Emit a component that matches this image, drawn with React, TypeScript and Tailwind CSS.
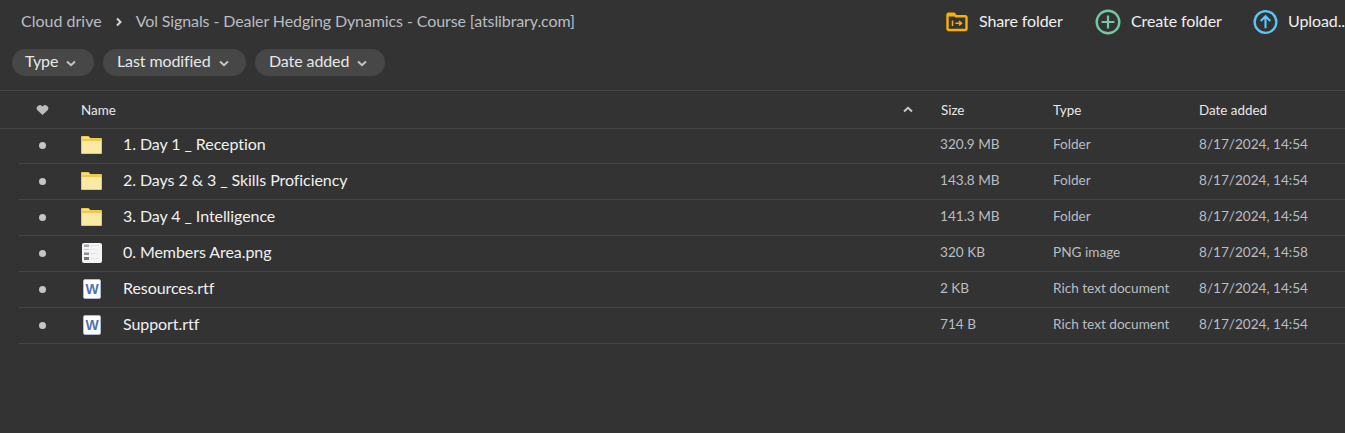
import React from "react";

interface FileRow {
  name: string;
  size: string;
  type: string;
  date: string;
  icon: "folder" | "image" | "word";
}

const rows: FileRow[] = [
  { name: "1. Day 1 _ Reception", size: "320.9 MB", type: "Folder", date: "8/17/2024, 14:54", icon: "folder" },
  { name: "2. Days 2 & 3 _ Skills Proficiency", size: "143.8 MB", type: "Folder", date: "8/17/2024, 14:54", icon: "folder" },
  { name: "3. Day 4 _ Intelligence", size: "141.3 MB", type: "Folder", date: "8/17/2024, 14:54", icon: "folder" },
  { name: "0. Members Area.png", size: "320 KB", type: "PNG image", date: "8/17/2024, 14:58", icon: "image" },
  { name: "Resources.rtf", size: "2 KB", type: "Rich text document", date: "8/17/2024, 14:54", icon: "word" },
  { name: "Support.rtf", size: "714 B", type: "Rich text document", date: "8/17/2024, 14:54", icon: "word" },
];

const FolderIcon = () => (
  <svg width="21" height="18" viewBox="0 0 21 18">
    <path d="M0 1a1 1 0 0 1 1-1h6.500l2 2H20a1 1 0 0 1 1 1v14a1 1 0 0 1-1 1H1a1 1 0 0 1-1-1Z" fill="#efc94c" />
    <path d="M1 5h19v11.500a.5.5 0 0 1-.5.5h-18a.5.5 0 0 1-.5-.5Z" fill="#fbe9a6" />
    <path d="M1 1h6l2 2H1Z" fill="#f5dc86" />
  </svg>
);

const ImageIcon = () => (
  <svg width="20" height="20" viewBox="0 0 20 20">
    <rect x="0" y="0" width="20" height="20" rx="2" fill="#f4f4f4" />
    <rect x="2" y="1.500" width="5" height="2.500" fill="#a4a7ac" />
    <rect x="8" y="2" width="9" height="1" fill="#e2e2e2" />
    <rect x="2" y="6" width="5" height="1" fill="#c4c6ca" />
    <rect x="8" y="6" width="8" height="1" fill="#e8e8e8" />
    <rect x="2" y="9.500" width="5" height="2.500" fill="#8a8e96" />
    <rect x="8" y="10" width="7" height="1" fill="#e2e2e2" />
    <rect x="2" y="14" width="5" height="3" fill="#6f747e" />
    <rect x="8" y="15" width="9" height="1" fill="#e8e8e8" />
  </svg>
);

const WordIcon = () => (
  <div className="flex h-[20px] w-[18px] items-center justify-center rounded-[2px] border-[1.5px] border-[#aebbd3] bg-white text-[14px] leading-none font-bold text-[#4f74b3] font-['Liberation_Sans',sans-serif]">
    W
  </div>
);

const Chevron = () => (
  <svg width="10" height="7" viewBox="0 0 10 7" className="mt-[2px]">
    <path d="M1 1.500 5 5.200 9 1.500" fill="none" stroke="#c4c4c4" strokeWidth="2" />
  </svg>
);

const Chip = ({ label, className }: { label: string; className: string }) => (
  <div className={`flex h-[27px] items-center gap-[8px] rounded-full bg-[#474747] text-[16px] tracking-[-0.1px] text-[#e8e8e8] ${className}`}>
    <span className="pb-[3px]">{label}</span>
    <Chevron />
  </div>
);

const Action = ({ icon, label, width }: { icon: React.ReactNode; label: string; width: string }) => (
  <div className={`flex items-center ${width}`}>
    {icon}
    <span className="whitespace-nowrap pb-[1px] text-[16px] tracking-[-0.1px] text-[#f0f0f0]">{label}</span>
  </div>
);

export default function App() {
  return (
    <div className="h-[433px] w-[1345px] overflow-hidden bg-[#333333] font-['Lato',sans-serif]">
      {/* top bar */}
      <div className="flex h-[43px] items-center">
        <div className="flex flex-1 items-center pl-[21px] text-[16px] text-[#b9bdc2]">
          <span className="pb-[1px]">Cloud drive</span>
          <svg width="8" height="10" viewBox="0 0 8 10" className="mx-[13px]">
            <path d="M2 1.500 5.500 5 2 8.500" fill="none" stroke="#d6d6d6" strokeWidth="2" />
          </svg>
          <span className="pb-[1px] tracking-[-0.1px]">Vol Signals - Dealer Hedging Dynamics - Course [atslibrary.com]</span>
        </div>
        <div className="flex w-[400px] shrink-0 items-center pl-[1px]">
          <Action
            width="w-[149px]"
            label="Share folder"
            icon={
              <svg width="22" height="20" viewBox="0 0 22 20" className="mr-[11px]">
                <path d="M1.500 3a1.200 1.200 0 0 1 1.200-1.200H8l2 2.500h9.300a1.200 1.200 0 0 1 1.200 1.200v11.300a1.200 1.200 0 0 1-1.200 1.200H2.700a1.200 1.200 0 0 1-1.200-1.200Z" fill="none" stroke="#f9b000" strokeWidth="2.400" />
                <path d="M1.500 2h6.500l2 2.500H1.500Z" fill="#f9b000" />
                <path d="M6.500 8.500v5.500M9.500 11.200h6M13 9l2.500 2.200-2.500 2.200" fill="none" stroke="#f9b000" strokeWidth="1.500" />
              </svg>
            }
          />
          <Action
            width="w-[158px]"
            label="Create folder"
            icon={
              <svg width="26" height="26" viewBox="0 0 26 26" className="mr-[10px]">
                <circle cx="13" cy="13" r="11.300" fill="none" stroke="#74c8a3" strokeWidth="2.400" />
                <path d="M13 6.500v13M6.500 13h13" fill="none" stroke="#74c8a3" strokeWidth="2.200" />
              </svg>
            }
          />
          <Action
            width="w-[92px]"
            label="Upload.."
            icon={
              <svg width="26" height="26" viewBox="0 0 26 26" className="mr-[10px]">
                <circle cx="13" cy="13" r="11.300" fill="none" stroke="#5cc7f5" strokeWidth="2.400" />
                <path d="M13 19.500V7.500M8 12l5-5 5 5" fill="none" stroke="#5cc7f5" strokeWidth="2.200" />
              </svg>
            }
          />
        </div>
      </div>

      {/* filters */}
      <div className="mt-[6px] flex gap-[9px] pl-[12px]">
        <Chip label="Type" className="w-[82px] pl-[13px]" />
        <Chip label="Last modified" className="w-[143px] pl-[14px]" />
        <Chip label="Date added" className="w-[130px] pl-[14px]" />
      </div>

      {/* table header */}
      <div className="mt-[14px] flex h-[39px] items-center border-y border-[#464646] pt-[1px] text-[13.4px] text-[#e8e8e8]">
        <div className="w-[81px] pb-[1px] pl-[36px]">
          <svg width="13" height="12" viewBox="0 0 14 12">
            <path d="M7 11.500 1.300 6A3.300 3.300 0 0 1 7 2.300 3.300 3.300 0 0 1 12.700 6Z" fill="#bdbdbd" />
          </svg>
        </div>
        <div className="flex w-[860px] items-center justify-between pr-[28px]">
          <span>Name</span>
          <svg width="10" height="7" viewBox="0 0 10 7">
            <path d="M1 5.500 5 1.800 9 5.500" fill="none" stroke="#c8c8c8" strokeWidth="2" />
          </svg>
        </div>
        <div className="w-[112px]">Size</div>
        <div className="w-[146px]">Type</div>
        <div>Date added</div>
      </div>

      {/* rows */}
      <div className="ml-[19px]">
        {rows.map((row, i) => (
          <div key={row.name} className={`flex items-center border-b border-[#464646] ${i === 0 ? "h-[35px] pb-[2px]" : "h-[36px] pb-[1px]"}`}>
            <div className="flex w-[62px] pl-[20px]">
              <div className="h-[7px] w-[7px] rounded-full bg-[#c2c6ca]" />
            </div>
            <div className="flex w-[42px] items-center">
              {row.icon === "folder" && <FolderIcon />}
              {row.icon === "image" && (
                <div className="pl-[1px]">
                  <ImageIcon />
                </div>
              )}
              {row.icon === "word" && (
                <div className="pl-[2px]">
                  <WordIcon />
                </div>
              )}
            </div>
            <div className="w-[817px] pb-[2px] text-[16px] tracking-[-0.07px] text-[#f0f0f0]">{row.name}</div>
            <div className="w-[113px] pb-[1px] text-[13.6px] text-[#b9bdc2]">{row.size}</div>
            <div className="w-[146px] pb-[1px] text-[13.6px] text-[#b9bdc2]">{row.type}</div>
            <div className="pb-[1px] text-[13.6px] text-[#b9bdc2]">{row.date}</div>
          </div>
        ))}
      </div>
    </div>
  );
}
